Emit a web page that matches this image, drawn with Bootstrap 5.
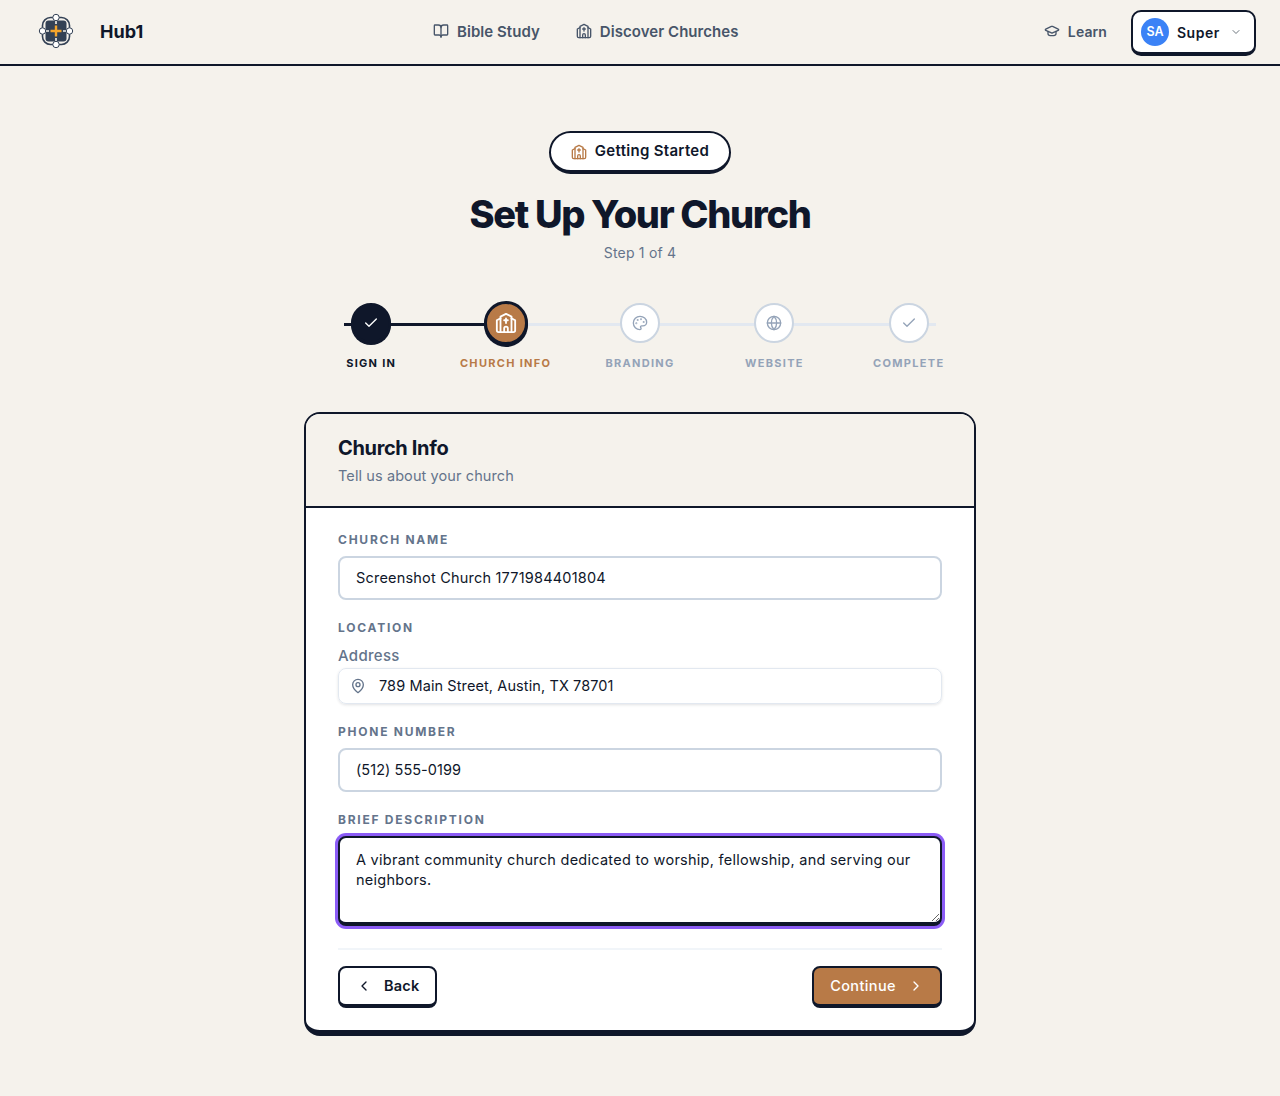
<!DOCTYPE html>
<html lang="en">
<head>
  <meta charset="UTF-8" />
  <meta name="viewport" content="width=device-width, initial-scale=1" />
  <title>Hub1 - Set Up Your Church</title>
  <link href="https://cdn.jsdelivr.net/npm/bootstrap@5.3.2/dist/css/bootstrap.min.css" rel="stylesheet" />
  <style>
    :root { --ink: #0f172a; --slate: #64748b; --copper: #b87a47; --paper: #f5f2ec; }
    body { background: var(--paper); color: var(--ink); font-family: Inter, "Liberation Sans", sans-serif; min-height: 1096px; }
    svg.ico { fill: none; stroke: currentColor; stroke-width: 2; stroke-linecap: round; stroke-linejoin: round; flex-shrink: 0; }
    .ico-copper { color: var(--copper); }

    .topbar { height: 66px; border-bottom: 2px solid var(--ink); padding: 0 24px 0 38px; }
    .brand-name { font-size: 18px; font-weight: 700; margin: 0 0 2px 26px; }
    .top-link { color: #475569; font-size: 15px; font-weight: 600; letter-spacing: .05px; text-decoration: none; gap: 8px; }
    .top-link svg { margin-bottom: 2px; }
    .top-link.tight { font-size: 14px; letter-spacing: .1px; margin-bottom: 2px; }
    .top-link.tight svg { margin-bottom: 0; }
    .top-middle { left: 433px; gap: 36px; }
    .user-btn { width: 125px; height: 46px; background: #fff; border: 2px solid var(--ink); border-bottom-width: 4px; border-radius: 10px; padding: 0 8px; margin: 2px 0 0 24px; color: var(--ink); font-size: 14px; font-weight: 600; letter-spacing: .5px; }
    .user-avatar { width: 28px; height: 28px; border-radius: 50%; background: #3b82f6; color: #fff; font-size: 12.5px; font-weight: 600; letter-spacing: 0; }

    .pill-tag { height: 43px; width: 182px; background: #fff; border: 2px solid var(--ink); border-bottom-width: 4px; border-radius: 22px; font-size: 15px; font-weight: 600; letter-spacing: .3px; gap: 8px; margin-top: 65px; }
    .page-title { font-size: 38px; font-weight: 800; letter-spacing: -.035em; line-height: 44px; margin: 18px 0 0; }
    .step-count { color: var(--slate); font-size: 14px; letter-spacing: .2px; line-height: 20px; margin-top: 7px; }

    .wizard { width: 672px; margin-top: 40px; height: 69px; }
    .wizard-track { position: absolute; left: 40px; right: 40px; top: 20px; height: 3px; background: #e2e8f0; }
    .wizard-done { position: absolute; left: 0; width: 145px; height: 100%; background: var(--ink); }
    .wizard-step { width: 134.4px; z-index: 1; }
    .step-dot { width: 40px; height: 40px; border-radius: 50%; background: #fff; border: 2px solid #cbd5e1; color: #94a3b8; }
    .step-name { font-size: 11px; font-weight: 700; letter-spacing: 1.3px; color: #94a3b8; margin-top: 12px; line-height: 16px; text-transform: uppercase; }
    .wizard-step.is-done .step-dot { background: var(--ink); border-color: var(--ink); color: #fff; box-shadow: 0 2px 0 var(--ink); }
    .wizard-step.is-done .step-name { color: var(--ink); }
    .wizard-step.is-now .step-dot { width: 44px; height: 44px; margin: -2px 0; background: var(--copper); border: 3px solid var(--ink); color: #fff; box-shadow: 0 2px 0 var(--ink); }
    .wizard-step.is-now .step-name { color: var(--copper); }

    .setup-card { width: 672px; height: 624px; margin-top: 40px; border: 2px solid var(--ink); border-bottom-width: 6px; border-radius: 16px; overflow: hidden; background: #fff; }
    .setup-head { height: 94px; background: var(--paper); border-bottom: 2px solid var(--ink); padding: 22px 32px 0; }
    .setup-head h2 { font-size: 20px; font-weight: 700; letter-spacing: -.35px; line-height: 24px; margin: 0; }
    .setup-head p { color: var(--slate); font-size: 14.5px; letter-spacing: .1px; line-height: 20px; margin: 6px 0 0; }
    .setup-body { padding: 24px 32px; }
    .cap-label { display: block; color: var(--slate); font-size: 12px; font-weight: 700; letter-spacing: 1.75px; line-height: 16px; text-transform: uppercase; margin: 0 0 8px; }
    .cap-label.loc { margin-bottom: 10px; }
    .sub-label { color: var(--slate); font-size: 15px; font-weight: 500; letter-spacing: .3px; line-height: 20px; margin-bottom: 2px; }
    .fld.form-control { height: 44px; border: 2px solid #cbd5e1; border-radius: 8px; padding: 0 16px 2px; font-size: 14.5px; letter-spacing: .2px; color: var(--ink); box-shadow: none; margin-bottom: 20px; }
    .fld.form-control.snug { letter-spacing: .05px; }
    .addr-wrap { height: 36px; border: 1px solid #e2e8f0; border-radius: 8px; box-shadow: 0 1px 3px rgba(15,23,42,.12); padding: 0 11px; gap: 13px; color: #64748b; margin-bottom: 20px; }
    .addr-wrap input { border: 0; outline: 0; width: 100%; font-size: 14.5px; letter-spacing: .1px; color: var(--ink); padding: 0; background: transparent; }
    .desc-box.form-control { height: 90px; border: 2px solid var(--ink); border-bottom-width: 4px; border-radius: 8px; padding: 12px 16px; font-size: 14.5px; letter-spacing: .26px; line-height: 20px; color: var(--ink); box-shadow: 0 0 0 3px #8b5cf6; }
    .form-rule { height: 2px; background: #f1f5f9; margin: 22px 0 16px; }
    .act-btn { height: 42px; border: 2px solid var(--ink); border-bottom-width: 4px; border-radius: 8px; font-size: 14.5px; font-weight: 600; letter-spacing: .2px; color: var(--ink); background: #fff; padding: 0 16px; gap: 12px; }
    .act-btn.go { background: var(--copper); color: #fff; font-weight: 500; letter-spacing: .4px; }
    .logo-mark { width: 36px; height: 36px; margin-bottom: 2px; }
  </style>
</head>
<body>
  <svg width="0" height="0" class="position-absolute">
    <symbol id="i-church" viewBox="0 0 24 24"><path d="M10 9h4"/><path d="M12 7v5"/><path d="M14 22v-4a2 2 0 0 0-4 0v4"/><path d="M18 22V5l-6-3-6 3v17"/><path d="m18 7 4 2v11a2 2 0 0 1-2 2H4a2 2 0 0 1-2-2V9l4-2"/></symbol>
    <symbol id="i-book" viewBox="0 0 24 24"><path d="M12 7v14"/><path d="M3 18a1 1 0 0 1-1-1V4a1 1 0 0 1 1-1h5a4 4 0 0 1 4 4 4 4 0 0 1 4-4h5a1 1 0 0 1 1 1v13a1 1 0 0 1-1 1h-6a3 3 0 0 0-3 3 3 3 0 0 0-3-3z"/></symbol>
    <symbol id="i-cap" viewBox="0 0 24 24"><path d="M21.42 10.922a1 1 0 0 0-.019-1.838L12.83 5.18a2 2 0 0 0-1.66 0L2.6 9.08a1 1 0 0 0 0 1.832l8.57 3.908a2 2 0 0 0 1.66 0z"/><path d="M6 12.5V16a6 3 0 0 0 12 0v-3.5"/></symbol>
    <symbol id="i-check" viewBox="0 0 24 24"><path d="M20 6 9 17l-5-5"/></symbol>
    <symbol id="i-palette" viewBox="0 0 24 24"><circle cx="13.5" cy="6.5" r=".5"/><circle cx="17.5" cy="10.5" r=".5"/><circle cx="8.5" cy="7.5" r=".5"/><circle cx="6.5" cy="12.5" r=".5"/><path d="M12 2C6.5 2 2 6.5 2 12s4.5 10 10 10c.926 0 1.648-.746 1.648-1.688 0-.437-.18-.835-.437-1.125-.29-.289-.438-.652-.438-1.125a1.64 1.64 0 0 1 1.668-1.668h1.996c3.051 0 5.555-2.503 5.555-5.554C21.965 6.012 17.461 2 12 2z"/></symbol>
    <symbol id="i-globe" viewBox="0 0 24 24"><circle cx="12" cy="12" r="10"/><path d="M12 2a14.5 14.5 0 0 0 0 20 14.5 14.5 0 0 0 0-20"/><path d="M2 12h20"/></symbol>
    <symbol id="i-pin" viewBox="0 0 24 24"><path d="M20 10c0 6-8 12-8 12s-8-6-8-12a8 8 0 0 1 16 0Z"/><circle cx="12" cy="10" r="3"/></symbol>
    <symbol id="i-down" viewBox="0 0 24 24"><path d="m6 9 6 6 6-6"/></symbol>
    <symbol id="i-left" viewBox="0 0 24 24"><path d="m15 18-6-6 6-6"/></symbol>
    <symbol id="i-right" viewBox="0 0 24 24"><path d="m9 18 6-6-6-6"/></symbol>
  </svg>

  <nav class="topbar d-flex align-items-center position-relative">
    <svg class="logo-mark" viewBox="0 0 36 36">
      <rect x="4.5" y="4.5" width="27" height="27" rx="8" fill="#f5f2ec" stroke="#334155" stroke-width="1.6"/>
      <rect x="7.5" y="7.5" width="21" height="21" rx="3" fill="#334155"/>
      <path d="M18 8v3M18 25v3M8 18h3M25 18h3" stroke="#f5f2ec" stroke-width="1.6"/>
      <path d="M18 12.5v11M12.5 18h11" stroke="#f5a52b" stroke-width="2.4"/>
      <g fill="#fff" stroke="#334155" stroke-width="1">
        <circle cx="18" cy="4.5" r="3.2"/><circle cx="18" cy="31.5" r="3.2"/><circle cx="4.5" cy="18" r="3.2"/><circle cx="31.5" cy="18" r="3.2"/>
      </g>
    </svg>
    <span class="brand-name">Hub1</span>
    <div class="top-middle d-flex position-absolute">
      <a href="#" class="top-link d-flex align-items-center"><svg class="ico" width="16" height="16"><use href="#i-book"/></svg>Bible Study</a>
      <a href="#" class="top-link d-flex align-items-center"><svg class="ico" width="16" height="16"><use href="#i-church"/></svg>Discover Churches</a>
    </div>
    <div class="d-flex align-items-center ms-auto">
      <a href="#" class="top-link tight d-flex align-items-center"><svg class="ico" width="16" height="16"><use href="#i-cap"/></svg>Learn</a>
      <button class="user-btn d-flex align-items-center" type="button">
        <span class="user-avatar d-flex align-items-center justify-content-center me-2">SA</span>Super
        <svg class="ico ms-auto me-1 text-secondary" width="12" height="12"><use href="#i-down"/></svg>
      </button>
    </div>
  </nav>

  <main class="d-flex flex-column align-items-center">
    <div class="pill-tag d-flex align-items-center justify-content-center">
      <svg class="ico ico-copper" width="16" height="16"><use href="#i-church"/></svg>Getting Started
    </div>
    <h1 class="page-title">Set Up Your Church</h1>
    <div class="step-count">Step 1 of 4</div>

    <div class="wizard d-flex position-relative">
      <div class="wizard-track" aria-hidden="true"><div class="wizard-done"></div></div>
      <div class="wizard-step is-done d-flex flex-column align-items-center">
        <div class="step-dot d-flex align-items-center justify-content-center"><svg class="ico" width="16" height="16"><use href="#i-check"/></svg></div>
        <div class="step-name">Sign In</div>
      </div>
      <div class="wizard-step is-now d-flex flex-column align-items-center">
        <div class="step-dot d-flex align-items-center justify-content-center"><svg class="ico" width="22" height="22"><use href="#i-church"/></svg></div>
        <div class="step-name">Church Info</div>
      </div>
      <div class="wizard-step d-flex flex-column align-items-center">
        <div class="step-dot d-flex align-items-center justify-content-center"><svg class="ico" width="16" height="16"><use href="#i-palette"/></svg></div>
        <div class="step-name">Branding</div>
      </div>
      <div class="wizard-step d-flex flex-column align-items-center">
        <div class="step-dot d-flex align-items-center justify-content-center"><svg class="ico" width="16" height="16"><use href="#i-globe"/></svg></div>
        <div class="step-name">Website</div>
      </div>
      <div class="wizard-step d-flex flex-column align-items-center">
        <div class="step-dot d-flex align-items-center justify-content-center"><svg class="ico" width="16" height="16"><use href="#i-check"/></svg></div>
        <div class="step-name">Complete</div>
      </div>
    </div>

    <section class="setup-card">
      <header class="setup-head">
        <h2>Church Info</h2>
        <p>Tell us about your church</p>
      </header>
      <form class="setup-body">
        <label class="cap-label" for="churchName">Church Name</label>
        <input id="churchName" class="fld form-control" type="text" value="Screenshot Church 1771984401804" />
        <div class="cap-label loc">Location</div>
        <div class="sub-label">Address</div>
        <div class="addr-wrap d-flex align-items-center">
          <svg class="ico" width="16" height="16"><use href="#i-pin"/></svg>
          <input type="text" value="789 Main Street, Austin, TX 78701" aria-label="Address" />
        </div>
        <label class="cap-label" for="phone">Phone Number</label>
        <input id="phone" class="fld snug form-control" type="text" value="(512) 555-0199" />
        <label class="cap-label" for="desc">Brief Description</label>
        <textarea id="desc" class="desc-box form-control">A vibrant community church dedicated to worship, fellowship, and serving our neighbors.</textarea>
        <div class="form-rule"></div>
        <div class="d-flex justify-content-between">
          <button type="button" class="act-btn d-flex align-items-center"><svg class="ico" width="16" height="16"><use href="#i-left"/></svg>Back</button>
          <button type="button" class="act-btn go d-flex align-items-center">Continue<svg class="ico" width="16" height="16"><use href="#i-right"/></svg></button>
        </div>
      </form>
    </section>
  </main>

  <script src="https://cdn.jsdelivr.net/npm/bootstrap@5.3.2/dist/js/bootstrap.bundle.min.js"></script>
</body>
</html>
